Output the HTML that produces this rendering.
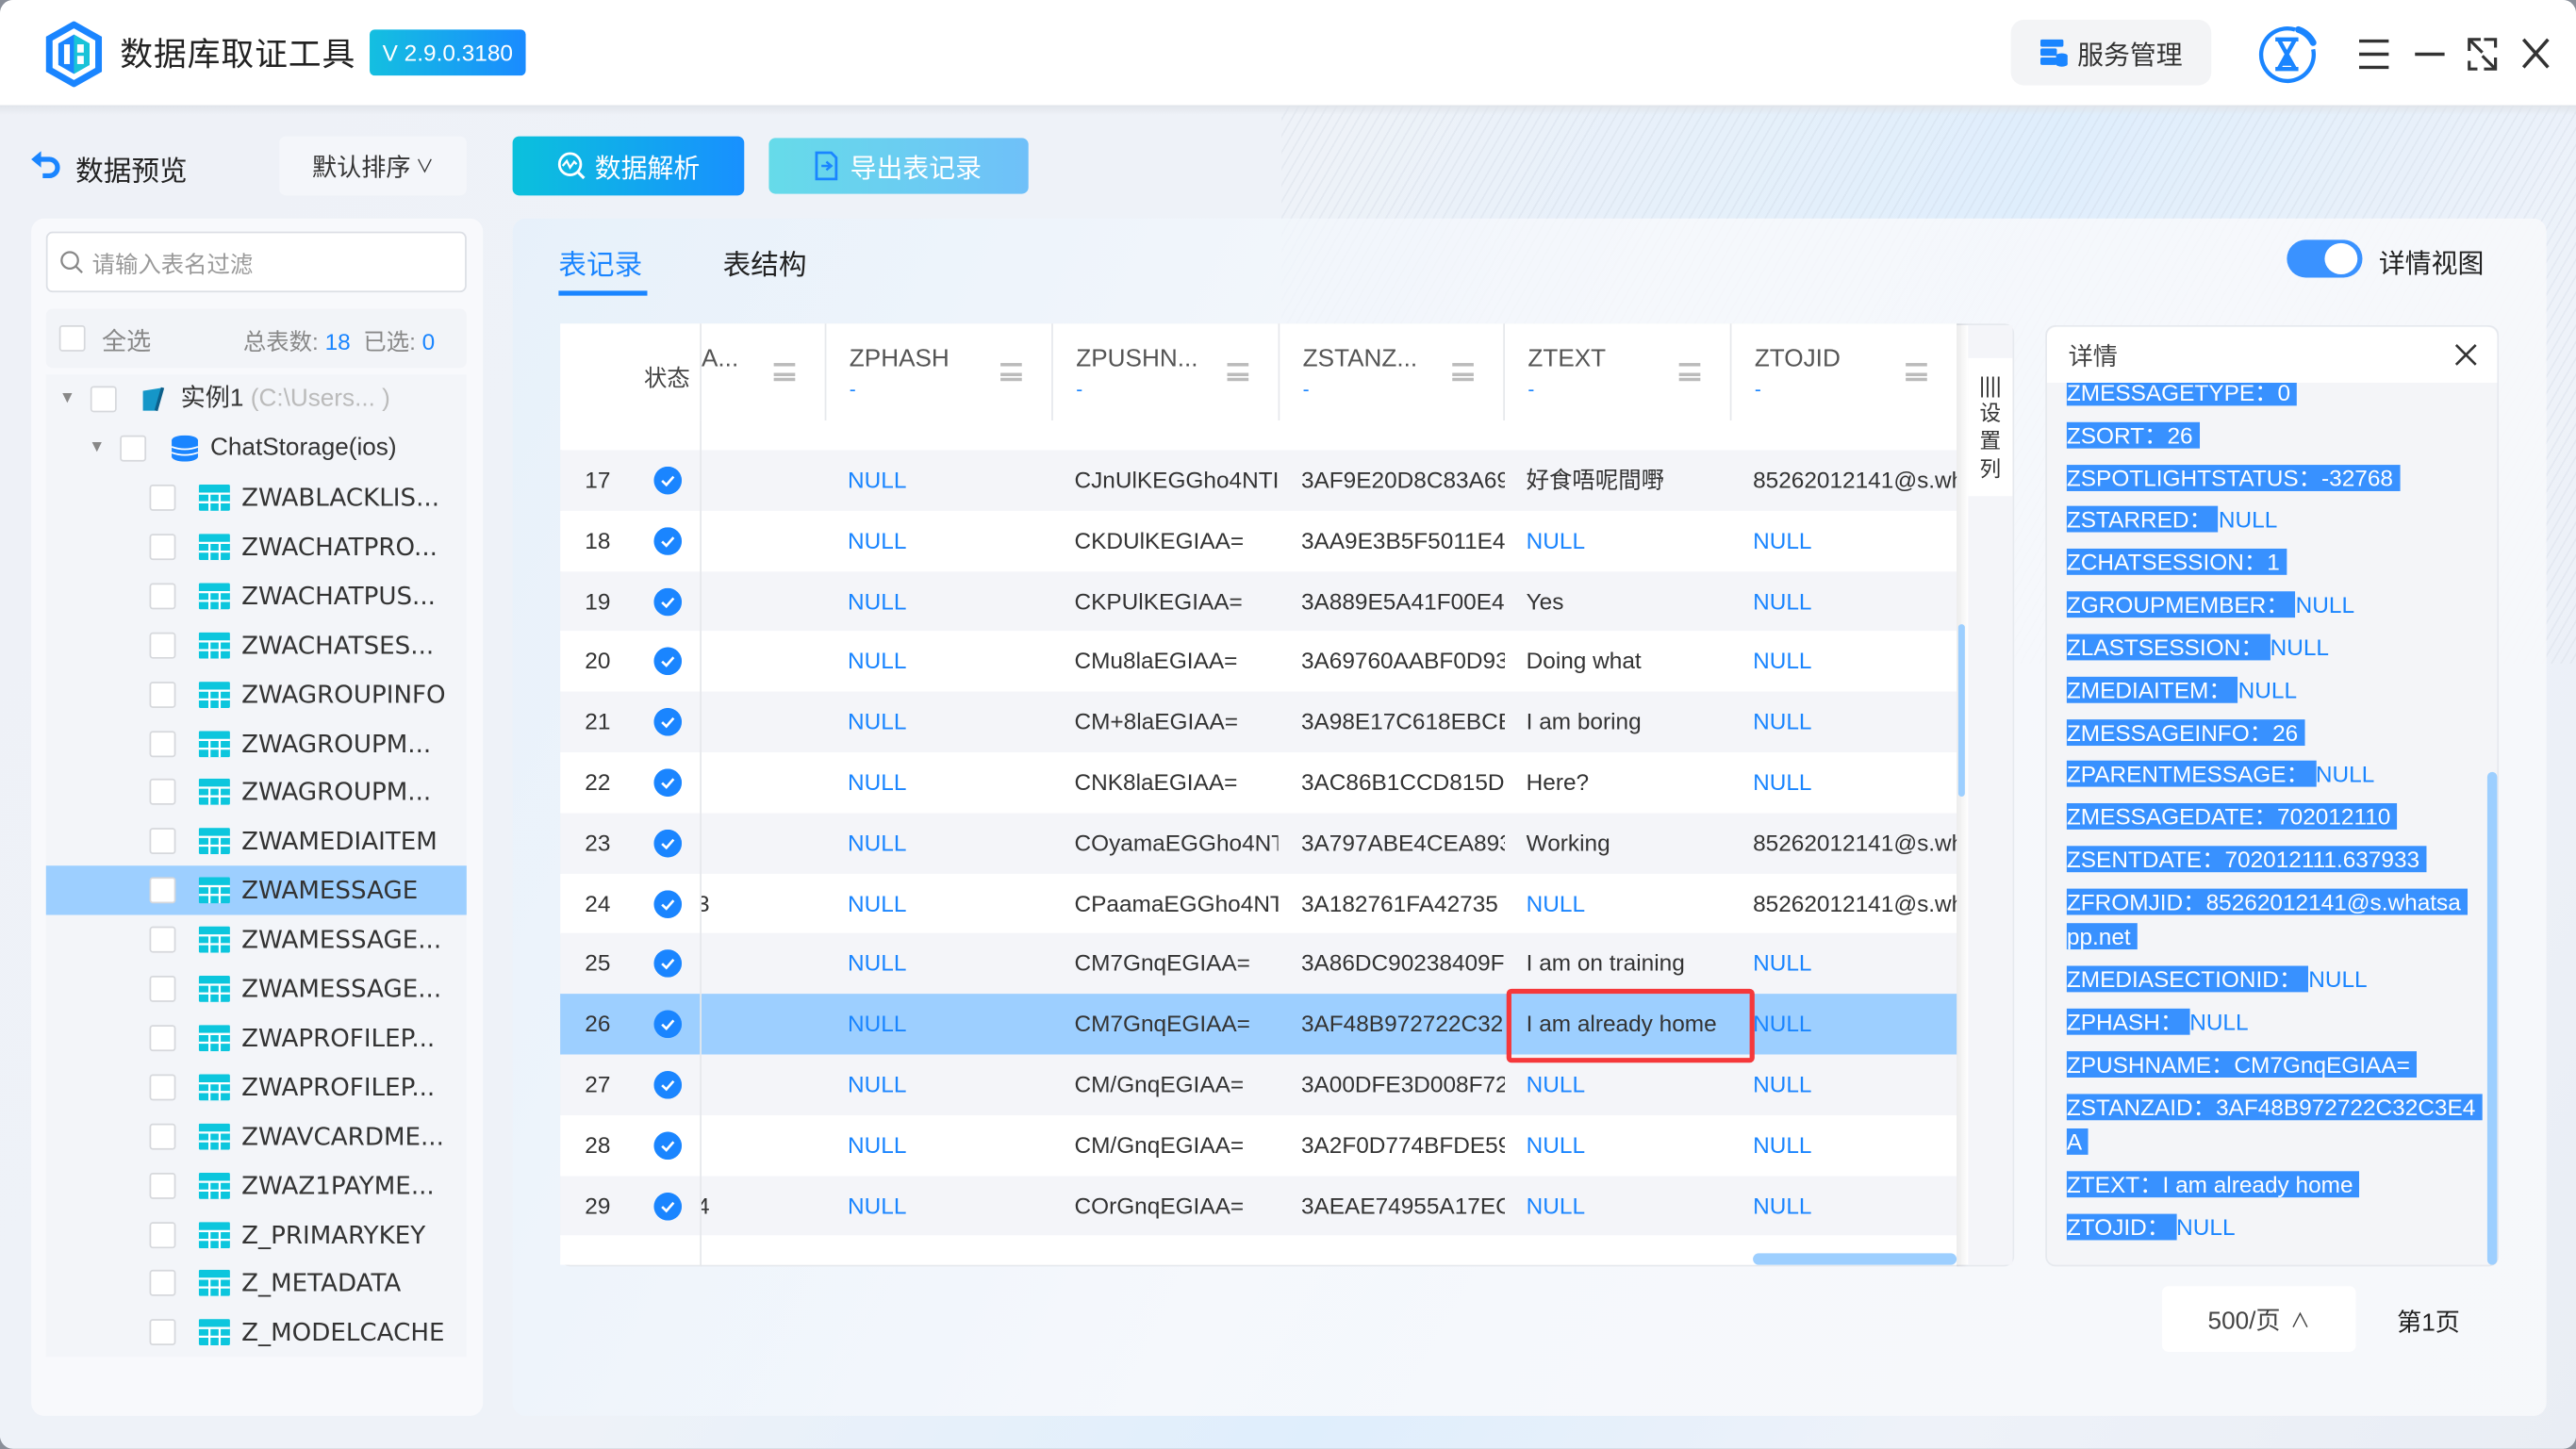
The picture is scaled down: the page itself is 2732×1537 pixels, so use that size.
<!DOCTYPE html>
<html><head><meta charset="utf-8">
<style>
*{margin:0;padding:0;box-sizing:border-box}
html,body{width:2732px;height:1536px;overflow:hidden;background:#8a8f99}
#root{position:absolute;left:0;top:0;width:1568px;height:882px;transform:scale(1.74235);transform-origin:0 0;font-family:"Liberation Sans","Noto Sans CJK SC",sans-serif;color:#333;overflow:hidden;border-radius:8px;background:#eef1f7}
.a{position:absolute}
.dv{font-family:"DejaVu Sans","Noto Sans CJK SC",sans-serif}
.title{left:0;top:0;width:1568px;height:64px;background:#fff}
.bg{left:0;top:64px;width:1568px;height:818px;background:linear-gradient(120deg,#eef1f7 0%,#eef2f8 40%,#dfeefc 62%,#eef2f9 80%,#e9edf4 100%)}
.stripes{left:780px;top:64px;width:788px;height:340px;background:repeating-linear-gradient(120deg,rgba(255,255,255,0) 0 4px,rgba(190,198,212,.25) 4px 5px);opacity:.8}
.btn{display:flex;align-items:center;justify-content:center;border-radius:4px}
.cb{width:16px;height:16px;border:1px solid #d6d8dc;background:#fff;border-radius:2px}
.row{left:341px;width:850px;height:37px;font-size:14px}
.row span{position:absolute;top:0;line-height:37px;white-space:nowrap;overflow:hidden}
.nul{color:#1a85ff}
.chk{position:absolute;left:398px;width:17px;height:17px;border-radius:50%;background:#1a85ff}
.hd{position:absolute;top:0;height:59px;border-left:1px solid #e6e8ec}
.hd b{position:absolute;left:14px;top:13px;font-weight:normal;font-size:15px;color:#555}
.hd i{position:absolute;left:14px;top:33px;font-style:normal;font-size:12px;color:#1a85ff}
.hd u{position:absolute;right:18px;top:24px;width:13px;height:11px;border-top:2px solid #bbb;border-bottom:2px solid #bbb;text-decoration:none}
.hd u:after{content:"";position:absolute;left:0;right:0;top:3.5px;border-top:2px solid #bbb}
.tr{left:28px;width:256px;height:30px;font-size:15px;color:#333}
.tr .cb{position:absolute;left:63px;top:7px}
.tr .ic{position:absolute;left:93px;top:7px;width:19px;height:16px}
.tr span{position:absolute;left:119px;top:0;line-height:30px}
.di{position:absolute;left:1258px;font-size:14px;line-height:21px;height:21px;white-space:nowrap}
.di em{font-style:normal;background:#3891ff;color:#fff;padding-right:4px}
.di s{text-decoration:none;color:#1a85ff}
</style></head><body>
<div id="root">
<div class="a title"></div>
<div class="a bg"></div>
<div class="a stripes"></div>
<div class="a" style="left:0;top:64px;width:1568px;height:6px;background:linear-gradient(#e0e4ea,rgba(238,241,247,0))"></div>

<!-- logo -->
<svg class="a" style="left:27px;top:13px" width="36" height="40" viewBox="0 0 36 40">
<path d="M18 2 L33 10.5 L33 29.5 L18 38 L3 29.5 L3 10.5 Z" fill="none" stroke="#1a85ff" stroke-width="4"/>
<path d="M18 8 L27.5 13.5 L27.5 26.5 L18 32 L8.5 26.5 L8.5 13.5 Z" fill="#1a85ff"/>
<path d="M18 8 L27.5 13.5 L27.5 26.5 L18 32 Z" fill="#19c3d8"/>
<rect x="12" y="14" width="3.5" height="12" fill="#fff"/><rect x="20" y="14" width="4" height="5" fill="#fff"/><rect x="20" y="21" width="4" height="5" fill="#fff"/>
</svg>
<div class="a" style="left:73px;top:17px;font-size:20px;color:#222;letter-spacing:0.5px">数据库取证工具</div>
<div class="a btn" style="left:225px;top:18px;width:95px;height:28px;background:linear-gradient(90deg,#14bfe0,#1a8bff);color:#fff;font-size:14px;border-radius:3px">V 2.9.0.3180</div>

<div class="a btn" style="left:1224px;top:12px;width:122px;height:40px;background:#f3f4f6;border-radius:8px;font-size:16px;color:#333">
<svg width="18" height="18" viewBox="0 0 18 18" style="margin-right:5px"><rect x="1" y="1" width="14" height="4.5" rx="1" fill="#1a85ff"/><rect x="1" y="6.5" width="10" height="4.5" rx="1" fill="#1a85ff"/><rect x="1" y="12" width="10" height="4.5" rx="1" fill="#1a85ff"/><ellipse cx="14" cy="11" rx="3.5" ry="1.6" fill="#1a85ff"/><rect x="10.5" y="11" width="7" height="5" fill="#1a85ff"/><ellipse cx="14" cy="16" rx="3.5" ry="1.6" fill="#1a85ff"/></svg>服务管理</div>
<svg class="a" style="left:1372px;top:13px" width="40" height="40" viewBox="0 0 40 40"><path d="M36 17 A16 16 0 1 1 25 5" fill="none" stroke="#1a85ff" stroke-width="2.5"/><path d="M27 5 A16 16 0 0 1 36 13" fill="none" stroke="#1a85ff" stroke-width="4" stroke-linecap="round"/><path d="M13 11 H27 M13 29 H27 M15 11 L25 29 M25 11 L15 29" stroke="#1a85ff" stroke-width="2.5" fill="none"/><path d="M16 27 L24 27 L20 21 Z" fill="#1a85ff"/></svg>
<svg class="a" style="left:1432px;top:20px" width="124" height="26" viewBox="0 0 124 26">
<path d="M4 5 H22 M4 13 H22 M4 21 H22" stroke="#333" stroke-width="2"/>
<path d="M38 13 H56" stroke="#333" stroke-width="2"/>
<path d="M71 11 V4 H78 M71 4 L79 12 M87 15 V22 H80 M87 22 L79 14 M80 4 H87 V9 M71 17 V22 H76" stroke="#333" stroke-width="1.8" fill="none"/>
<path d="M104 4 L119 21 M119 4 L104 21" stroke="#333" stroke-width="2"/>
</svg>

<!-- toolbar -->
<svg class="a" style="left:18px;top:92px" width="20" height="18" viewBox="0 0 20 18"><path d="M4 5 H12 A5 5 0 0 1 12 15 H8" fill="none" stroke="#1a85ff" stroke-width="3"/><path d="M1 5 L7 0 L7 10 Z" fill="#1a85ff"/></svg>
<div class="a" style="left:46px;top:90px;font-size:17px;color:#222">数据预览</div>
<div class="a btn" style="left:170px;top:83px;width:114px;height:36px;background:#f4f6fa;font-size:15px;color:#333">默认排序 <span style="font-size:11px;margin-left:3px">∨</span></div>
<div class="a btn" style="left:312px;top:83px;width:141px;height:36px;background:linear-gradient(90deg,#0bc1dc,#1890ff);color:#fff;font-size:16px">
<svg width="18" height="18" viewBox="0 0 18 18" style="margin-right:5px"><circle cx="8" cy="8" r="6.5" fill="none" stroke="#fff" stroke-width="1.6"/><path d="M13 13 L16.5 16.5" stroke="#fff" stroke-width="1.8"/><path d="M3.5 9 L6 6 L8 10 L10.5 6.5 L12 8" stroke="#fff" stroke-width="1.3" fill="none"/></svg>数据解析</div>
<div class="a btn" style="left:468px;top:84px;width:158px;height:34px;background:linear-gradient(90deg,#66dbe9,#6fc0f9);color:#fff;font-size:16px">
<svg width="14" height="18" viewBox="0 0 14 18" style="margin-right:7px"><path d="M1 1 H10 L13 4 V17 H1 Z" fill="none" stroke="#1a85ff" stroke-width="1.6"/><path d="M4 9 H10 M7 6.5 L10 9 L7 11.5" stroke="#1a85ff" stroke-width="1.4" fill="none"/></svg>导出表记录</div>

<!-- left panel -->
<div class="a" style="left:19px;top:133px;width:275px;height:729px;background:#f8f9fc;border-radius:8px"></div>
<div class="a" style="left:28px;top:141px;width:256px;height:37px;background:#fff;border:1px solid #dcdfe5;border-radius:4px"></div>
<svg class="a" style="left:36px;top:152px" width="16" height="16" viewBox="0 0 16 16"><circle cx="6.5" cy="6.5" r="5" fill="none" stroke="#888" stroke-width="1.3"/><path d="M10 10 L14 14" stroke="#888" stroke-width="1.3"/></svg>
<div class="a" style="left:56px;top:151px;font-size:14px;color:#999">请输入表名过滤</div>
<div class="a" style="left:28px;top:188px;width:256px;height:36px;background:#f2f4f8;border-radius:4px"></div>
<div class="a cb" style="left:36px;top:198px"></div>
<div class="a" style="left:62px;top:197px;font-size:15px;color:#888">全选</div>
<div class="a" style="left:148px;top:198px;font-size:14px;color:#888">总表数: <span style="color:#1a85ff">18</span> &nbsp;已选: <span style="color:#1a85ff">0</span></div>
<div class="a" style="left:28px;top:228px;width:256px;height:598px;background:#f3f5f9"></div>

<div class="a tr" style="top:228px">
<span style="left:8px;font-size:10px;color:#888">▼</span>
<div class="cb" style="left:27px!important;top:7px;position:absolute"></div>
<svg class="ic" style="left:57px" viewBox="0 0 19 16"><path d="M2 3 L14 1 L10 15 L2 15 Z" fill="#1596c8"/><path d="M14 1 L10 15" stroke="#0d5f8a" stroke-width="2"/></svg>
<span style="left:82px">实例1 <span style="position:static;color:#bbb">(C:\Users... )</span></span></div>
<div class="a tr" style="top:258px">
<span style="left:26px;font-size:10px;color:#888">▼</span>
<div class="cb" style="left:45px;top:7px;position:absolute"></div>
<svg class="ic" style="left:75px" viewBox="0 0 19 16"><ellipse cx="9.5" cy="3" rx="8" ry="3" fill="#1a85ff"/><rect x="1.5" y="3" width="16" height="10" fill="#1a85ff"/><ellipse cx="9.5" cy="13" rx="8" ry="3" fill="#1a85ff"/><path d="M1.5 7 Q9.5 10 17.5 7 M1.5 10.5 Q9.5 13.5 17.5 10.5" stroke="#fff" stroke-width="1" fill="none"/></svg>
<span style="left:100px">ChatStorage(ios)</span></div>

<div class="a" style="left:28px;top:527px;width:256px;height:30px;background:#9dcfff"></div>
<div id="tree"></div>

<!-- main panel -->
<div class="a" style="left:312px;top:133px;width:1238px;height:729px;background:linear-gradient(115deg,rgba(225,240,253,.55),rgba(248,249,252,.85) 45%,rgba(247,248,251,.95));border-radius:8px"></div>
<div class="a" style="left:340px;top:147px;font-size:17px;color:#1a85ff">表记录</div>
<div class="a" style="left:340px;top:177px;width:54px;height:3px;background:#1a85ff"></div>
<div class="a" style="left:440px;top:147px;font-size:17px;color:#222">表结构</div>
<div class="a" style="left:1392px;top:146px;width:46px;height:23px;border-radius:12px;background:#3a92ff"></div>
<div class="a" style="left:1415px;top:148px;width:20px;height:19px;border-radius:50%;background:#fff"></div>
<div class="a" style="left:1448px;top:147px;font-size:16px;color:#222">详情视图</div>

<!-- table -->
<div class="a" style="left:341px;top:197px;width:885px;height:574px;background:#fff;border-radius:6px;border:1px solid #e6e9ee;overflow:hidden">
</div>
<div class="a" style="left:341px;top:256px;width:850px;height:18px;background:#fff;overflow:hidden"></div>
<div id="rows"></div>
<div class="a" style="left:341px;top:197px;width:850px;height:59px;background:#fff">
<div class="a" style="left:51px;top:23px;font-size:14px;color:#444">状态</div>
<div class="hd" style="left:85px;width:76px"><b style="left:0">A...</b><u></u></div>
<div class="hd" style="left:161px;width:138px"><b>ZPHASH</b><i>-</i><u></u></div>
<div class="hd" style="left:299px;width:138px"><b>ZPUSHN...</b><i>-</i><u></u></div>
<div class="hd" style="left:437px;width:137px"><b>ZSTANZ...</b><i>-</i><u></u></div>
<div class="hd" style="left:574px;width:138px"><b>ZTEXT</b><i>-</i><u></u></div>
<div class="hd" style="left:712px;width:138px"><b>ZTOJID</b><i>-</i><u></u></div>
</div>
<div class="a" style="left:426px;top:256px;width:1px;height:515px;background:#e6e8ec"></div>
<div class="a" style="left:1191px;top:197px;width:7px;height:574px;background:linear-gradient(90deg,rgba(0,0,0,.08),rgba(0,0,0,0))"></div>
<div class="a" style="left:1192px;top:380px;width:4px;height:105px;background:#9dcfff;border-radius:2px"></div>
<div class="a" style="left:1067px;top:763px;width:124px;height:7px;background:#9dcfff;border-radius:4px"></div>
<div class="a" style="left:1198px;top:198px;width:27px;height:572px;background:#f4f5f9"></div>
<div class="a" style="left:1198px;top:198px;width:27px;height:60px;background:#f4f5f9"></div>
<div class="a" style="left:1198px;top:218px;width:27px;height:84px;background:#fff;font-size:13px;color:#333;text-align:center;line-height:17px;padding-top:8px">||||<br>设<br>置<br>列</div>
<div class="a" style="left:917px;top:602px;width:151px;height:45px;border:3px solid #f5383b;border-radius:3px"></div>

<!-- detail -->
<div class="a" style="left:1245px;top:198px;width:276px;height:573px;background:#f4f5f8;border:1px solid #e6e9ee;border-radius:6px;overflow:hidden"></div>
<div class="a" style="left:1246px;top:199px;width:274px;height:34px;background:#fff;border-radius:6px 6px 0 0"></div>
<div class="a" style="left:1259px;top:206px;font-size:15px;color:#444">详情</div>
<svg class="a" style="left:1494px;top:209px" width="14" height="14" viewBox="0 0 14 14"><path d="M1 1 L13 13 M13 1 L1 13" stroke="#333" stroke-width="1.5"/></svg>
<div class="a" style="left:1246px;top:233px;width:274px;height:537px;overflow:hidden">
<div id="det" style="position:absolute;left:-1246px;top:-233px;width:1568px;height:882px"></div>
</div>
<div class="a" style="left:1514px;top:470px;width:6px;height:300px;background:#9dcfff;border-radius:3px"></div>

<!-- pagination -->
<div class="a btn" style="left:1316px;top:783px;width:118px;height:40px;background:#fff;border-radius:4px;font-size:15px;color:#444">500/页 <span style="font-size:12px;margin-left:6px">∧</span></div>
<div class="a" style="left:1459px;top:794px;font-size:15px;color:#222">第1页</div>
</div>
<script>
var names=["ZWABLACKLIS...","ZWACHATPRO...","ZWACHATPUS...","ZWACHATSES...","ZWAGROUPINFO","ZWAGROUPM...","ZWAGROUPM...","ZWAMEDIAITEM","ZWAMESSAGE","ZWAMESSAGE...","ZWAMESSAGE...","ZWAPROFILEP...","ZWAPROFILEP...","ZWAVCARDME...","ZWAZ1PAYME...","Z_PRIMARYKEY","Z_METADATA","Z_MODELCACHE"];
var h="";
names.forEach(function(n,i){var t=288+i*29.9;
h+='<div class="a tr dv" style="top:'+t+'px"><div class="cb"></div><svg class="ic" viewBox="0 0 19 16"><rect width="19" height="16" rx="1" fill="#0cc6dd"/><path d="M0 5.5H19M0 10.8H19M6.5 5.5V16M12.7 5.5V16" stroke="#fff" stroke-width="1.3"/></svg><span>'+n+'</span></div>';});
document.getElementById("tree").innerHTML=h;
var R=[["","NULL","CJnUlKEGGho4NTI2","3AF9E20D8C83A69","好食唔呢間嘢","85262012141@s.wh"],
["","NULL","CKDUlKEGIAA=","3AA9E3B5F5011E4","NULL","NULL"],
["","NULL","CKPUlKEGIAA=","3A889E5A41F00E4","Yes","NULL"],
["","NULL","CMu8laEGIAA=","3A69760AABF0D93","Doing what","NULL"],
["","NULL","CM+8laEGIAA=","3A98E17C618EBCB","I am boring","NULL"],
["","NULL","CNK8laEGIAA=","3AC86B1CCD815DD","Here?","NULL"],
["","NULL","COyamaEGGho4NT","3A797ABE4CEA893","Working","85262012141@s.wh"],
["3","NULL","CPaamaEGGho4NT","3A182761FA42735","NULL","85262012141@s.wh"],
["","NULL","CM7GnqEGIAA=","3A86DC90238409F","I am on training","NULL"],
["","NULL","CM7GnqEGIAA=","3AF48B972722C32","I am already home","NULL"],
["","NULL","CM/GnqEGIAA=","3A00DFE3D008F72","NULL","NULL"],
["","NULL","CM/GnqEGIAA=","3A2F0D774BFDE59","NULL","NULL"],
["4","NULL","COrGnqEGIAA=","3AEAE74955A17EC","NULL","NULL"]];
var xs=[85,175,313,451,588,726],ws=[76,124,124,124,124,124];
h="";
R.forEach(function(r,i){var n=17+i,t=274+i*36.8;var bg=n==26?"#9dcfff":(i%2==0?"#f4f5f9":"#fff");
h+='<div class="a row" style="top:'+t+'px;background:'+bg+'"><span style="left:15px;width:30px;color:#333">'+n+'</span>';
h+='<svg style="position:absolute;left:57px;top:10px" width="17" height="17" viewBox="0 0 17 17"><circle cx="8.5" cy="8.5" r="8.5" fill="#1a85ff"/><path d="M5 8.7 L7.6 11.2 L12 6.2" stroke="#fff" stroke-width="1.5" fill="none"/></svg>';
r.forEach(function(c,j){if(!c)return;var l=xs[j]+(j==0?1:0);var w=(j==0?10:ws[j]);h+='<span class="'+(c=="NULL"?"nul":"")+'" style="left:'+l+'px;width:'+w+'px'+(j==0?';text-indent:-3px':'')+'">'+c+'</span>';});
h+='</div>';});
h+='<div class="a" style="left:341px;top:752px;width:850px;height:18px;background:#fff"></div>';
document.getElementById("rows").innerHTML=h;
var D=[[229,"ZMESSAGETYPE：0",""],[255,"ZSORT：26",""],[281,"ZSPOTLIGHTSTATUS：-32768",""],[306,"ZSTARRED：","NULL"],[332,"ZCHATSESSION：1",""],[358,"ZGROUPMEMBER：","NULL"],[384,"ZLASTSESSION：","NULL"],[410,"ZMEDIAITEM：","NULL"],[436,"ZMESSAGEINFO：26",""],[461,"ZPARENTMESSAGE：","NULL"],[487,"ZMESSAGEDATE：702012110",""],[513,"ZSENTDATE：702012111.637933",""],[539,"ZFROMJID：85262012141@s.whatsa",""],[560,"pp.net",""],[586,"ZMEDIASECTIONID：","NULL"],[612,"ZPHASH：","NULL"],[638,"ZPUSHNAME：CM7GnqEGIAA=",""],[664,"ZSTANZAID：3AF48B972722C32C3E4",""],[685,"A",""],[711,"ZTEXT：I am already home",""],[737,"ZTOJID：","NULL"]];
h="";D.forEach(function(d){h+='<div class="di" style="top:'+d[0]+'px"><em>'+d[1]+'</em>'+(d[2]?'<s>'+d[2]+'</s>':'')+'</div>';});
document.getElementById("det").innerHTML=h;
</script>
</body></html>
